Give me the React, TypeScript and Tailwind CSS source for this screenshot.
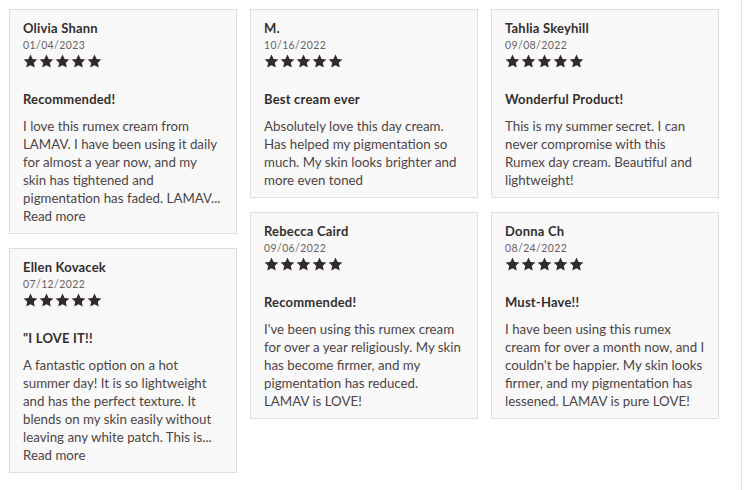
import React from "react";

type Review = {
  name: string;
  date: string;
  title: string;
  body: string;
  more?: boolean;
};

const columns: Review[][] = [
  [
    {
      name: "Olivia Shann",
      date: "01/04/2023",
      title: "Recommended!",
      body: "I love this rumex cream from LAMAV. I have been using it daily for almost a year now, and my skin has tightened and pigmentation has faded. LAMAV...",
      more: true,
    },
    {
      name: "Ellen Kovacek",
      date: "07/12/2022",
      title: "\"I LOVE IT!!",
      body: "A fantastic option on a hot summer day! It is so lightweight and has the perfect texture. It blends on my skin easily without leaving any white patch. This is...",
      more: true,
    },
  ],
  [
    {
      name: "M.",
      date: "10/16/2022",
      title: "Best cream ever",
      body: "Absolutely love this day cream. Has helped my pigmentation so much. My skin looks brighter and more even toned",
    },
    {
      name: "Rebecca Caird",
      date: "09/06/2022",
      title: "Recommended!",
      body: "I've been using this rumex cream for over a year religiously. My skin has become firmer, and my pigmentation has reduced. LAMAV is LOVE!",
    },
  ],
  [
    {
      name: "Tahlia Skeyhill",
      date: "09/08/2022",
      title: "Wonderful Product!",
      body: "This is my summer secret. I can never compromise with this Rumex day cream. Beautiful and lightweight!",
    },
    {
      name: "Donna Ch",
      date: "08/24/2022",
      title: "Must-Have!!",
      body: "I have been using this rumex cream for over a month now, and I couldn't be happier. My skin looks firmer, and my pigmentation has lessened. LAMAV is pure LOVE!",
    },
  ],
];

const Star = () => (
  <svg width="15" height="14" viewBox="0 0 24 23" className="fill-[#332b2b]">
    <path d="M12 0.8l3.4 7.3 7.9 0.9-5.9 5.4 1.6 7.9L12 18.3l-7 4 1.6-7.9L0.7 9l7.9-0.9z" />
  </svg>
);

const ReviewCard = ({ r }: { r: Review }) => {
  return (
    <div className="w-[228px] border border-[#dedede] bg-[#f9f9f9] px-[13px] pt-[10px] pb-[8px]">
      <div className="text-[13px] leading-[16px] font-bold text-[#332e2e] tracking-[0.2px]">
        {r.name}
      </div>
      <div className="mt-[2px] text-[10.5px] leading-[14px] text-[#6b6262] tracking-[0.4px]">
        {r.date}
      </div>
      <div className="mt-[2px] flex gap-[1px]">
        {[0, 1, 2, 3, 4].map((i) => (
          <Star key={i} />
        ))}
      </div>
      <div className="mt-[23px] text-[13px] leading-[17px] font-bold text-[#332e2e] tracking-[0.2px]">
        {r.title}
      </div>
      <p className="mt-[9px] text-[13.3px] leading-[18px] text-[#4d4545]">{r.body}</p>
      {r.more && (
        <div className="text-[13.3px] leading-[18px] text-[#4d4545]">Read more</div>
      )}
    </div>
  );
};

export default function App() {
  return (
    <div
      className="w-[742px] h-[490px] border-r border-[#e3e3e3] bg-white pl-[9px] pt-[9px]"
      style={{ fontFamily: "Lato, 'Open Sans', sans-serif" }}
    >
      <div className="flex items-start gap-[13px]">
        {columns.map((col, ci) => (
          <div key={ci} className="flex flex-col gap-[14px]">
            {col.map((r) => (
              <ReviewCard key={r.name} r={r} />
            ))}
          </div>
        ))}
      </div>
    </div>
  );
}
